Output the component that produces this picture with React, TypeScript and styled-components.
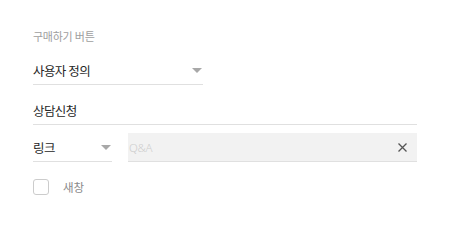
import { FC } from 'react';
import styled, { createGlobalStyle } from 'styled-components';

const GlobalStyle = createGlobalStyle`
    body {
        margin: 0;
        background: #fff;
        font-family: "Noto Sans", "Noto Sans CJK KR", sans-serif;
    }
`

const Form = styled.div`
    width: 384px;
    padding: 29px 0 0 33px;
    display: flex;
    flex-direction: column;
`

const Label = styled.div`
    font-size: 11px;
    line-height: 16px;
    color: #9e9e9e;
    letter-spacing: -0.3px;
`

const Field = styled.div<{ $width?: number; $gap?: number }>`
    box-sizing: border-box;
    width: ${p => (p.$width ? `${p.$width}px` : '100%')};
    margin-top: ${p => p.$gap ?? 0}px;
    height: 29px;
    display: flex;
    align-items: center;
    border-bottom: 1px solid #e0e0e0;
    font-size: 12.5px;
    color: #262626;
    letter-spacing: -0.6px;
`

const Value = styled.span`
    flex: 1;
`

const Arrow = styled.span`
    width: 0;
    height: 0;
    margin-right: 1px;
    border-left: 5px solid transparent;
    border-right: 5px solid transparent;
    border-top: 5px solid #a8a8a8;
`

const Row = styled.div`
    margin-top: 8px;
    display: flex;
    gap: 16px;
`

const Input = styled.div`
    box-sizing: border-box;
    flex: 1;
    height: 29px;
    display: flex;
    align-items: center;
    padding: 0 10px 0 1px;
    background: #f2f2f2;
    border-bottom: 1px solid #e0e0e0;
`

const Placeholder = styled.span`
    flex: 1;
    font-size: 11.5px;
    font-weight: 300;
    color: #cdcdcd;
    letter-spacing: -0.3px;
`

const Check = styled.label`
    margin-top: 17px;
    display: flex;
    align-items: center;
    gap: 14px;
    font-size: 11.5px;
    color: #8a8a8a;
`

const Box = styled.span`
    box-sizing: border-box;
    width: 16px;
    height: 16px;
    border: 1px solid #cccccc;
    border-radius: 3px;
    background: #fff;
`

const Close = () => (
    <svg width="9" height="9" viewBox="0 0 9 9">
        <path d="M0.5 0.5L8.5 8.5M8.5 0.5L0.5 8.5" stroke="#555" strokeWidth="1.3" />
    </svg>
)

const App: FC = () => {
    return (
        <>
            <GlobalStyle />
            <Form>
                <Label>구매하기 버튼</Label>
                <Field $width={170} $gap={11}>
                    <Value>사용자 정의</Value>
                    <Arrow />
                </Field>
                <Field $gap={11}>
                    <Value>상담신청</Value>
                </Field>
                <Row>
                    <Field $width={79}>
                        <Value>링크</Value>
                        <Arrow />
                    </Field>
                    <Input>
                        <Placeholder>Q&amp;A</Placeholder>
                        <Close />
                    </Input>
                </Row>
                <Check>
                    <Box />
                    새창
                </Check>
            </Form>
        </>
    )
}

export default App;
